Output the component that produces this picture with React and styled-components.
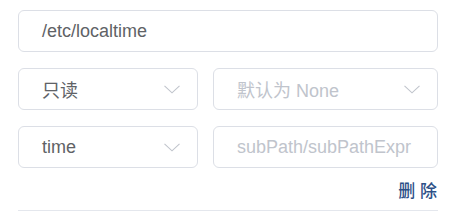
import React from "react";
import styled, { createGlobalStyle } from "styled-components";

const Global = createGlobalStyle`
  html, body {
    margin: 0;
    padding: 0;
    background: #ffffff;
  }
  body {
    font-family: "Liberation Sans", Arial, "Noto Sans CJK SC", sans-serif;
  }
`;

const Panel = styled.div`
  width: 420px;
  padding: 10px 0 0 18px;
  display: flex;
  flex-direction: column;
`;

const Row = styled.div`
  display: grid;
  grid-template-columns: 180px 1fr;
  column-gap: 15px;
  margin-top: ${(p) => p.$gap || 0}px;
`;

const Field = styled.div`
  box-sizing: border-box;
  height: 42px;
  border: 1px solid #dcdfe6;
  border-radius: 6px;
  padding: 0 17px 0 23px;
  display: flex;
  align-items: center;
  justify-content: space-between;
  font-size: 18px;
  color: ${(p) => (p.$placeholder ? "#c0c4cc" : "#606266")};
  white-space: nowrap;
  overflow: hidden;
`;

const Label = styled.span`
  font-family: "Liberation Sans", Arial, "Noto Sans CJK SC", sans-serif;
`;

const Chevron = () => (
  <svg width="16" height="9" viewBox="0 0 16 9" fill="none">
    <path d="M0.5 0.8 L8 7.8 L15.5 0.8" stroke="#c0c4cc" strokeWidth="1.1" />
  </svg>
);

const Footer = styled.div`
  display: flex;
  justify-content: flex-end;
  padding: 10px 1px 0 0;
  height: 32px;
  border-bottom: 1px solid #e4e7ed;
  box-sizing: content-box;
`;

const Delete = styled.span`
  font-family: "Noto Sans CJK SC", sans-serif;
  font-size: 17px;
  font-weight: 500;
  line-height: 24px;
  letter-spacing: 0.5px;
  margin-right: -0.5px;
  color: #2d5087;
  cursor: pointer;
`;

export default function App() {
  return (
    <>
      <Global />
      <Panel>
        <Field>
          <Label>/etc/localtime</Label>
        </Field>
        <Row $gap={16}>
          <Field>
            <Label>只读</Label>
            <Chevron />
          </Field>
          <Field $placeholder>
            <Label>默认为 None</Label>
            <Chevron />
          </Field>
        </Row>
        <Row $gap={16}>
          <Field>
            <Label>time</Label>
            <Chevron />
          </Field>
          <Field $placeholder>
            <Label>subPath/subPathExpr</Label>
          </Field>
        </Row>
        <Footer>
          <Delete>删 除</Delete>
        </Footer>
      </Panel>
    </>
  );
}
